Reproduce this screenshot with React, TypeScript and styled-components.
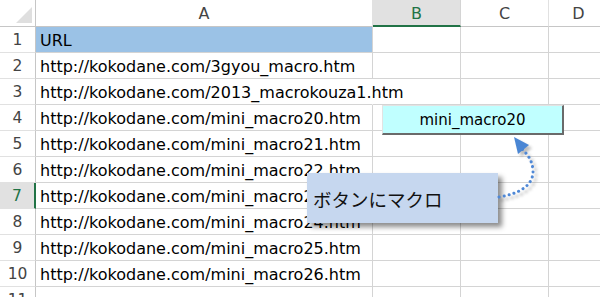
import React from "react";
import styled, { createGlobalStyle } from "styled-components";

const Global = createGlobalStyle`
  html, body { margin: 0; padding: 0; background: #fff; overflow: hidden; }
  body { font-family: "DejaVu Sans", "Noto Sans CJK JP", sans-serif; }
`;

const Sheet = styled.div`
  position: relative;
  width: 600px;
  height: 297px;
  overflow: hidden;
  background: #fff;
`;

const Grid = styled.div`
  display: grid;
  grid-template-columns: 36px 337px 88px 88px 60px;
  grid-template-rows: 27px repeat(11, 26px);
`;

const Corner = styled.div`
  position: relative;
  border-right: 1px solid #c6c6c6;
  border-bottom: 1px solid #c6c6c6;
  background: #fff;
  &::after {
    content: "";
    position: absolute;
    right: 3px;
    bottom: 3px;
    width: 0;
    height: 0;
    border-left: 16px solid transparent;
    border-bottom: 16px solid #dfdfdf;
  }
`;

const ColHead = styled.div<{ $active?: boolean }>`
  display: flex;
  align-items: center;
  justify-content: center;
  font-family: "DejaVu Sans", sans-serif;
  font-size: 16px;
  color: ${(p) => (p.$active ? "#217346" : "#444")};
  background: ${(p) => (p.$active ? "#e1e1e1" : "#fff")};
  border-right: 1px solid ${(p) => (p.$active ? "#d4d4d4" : "#e1e1e1")};
  border-bottom: ${(p) => (p.$active ? "2px solid #217346" : "1px solid #c6c6c6")};
  padding-top: ${(p) => (p.$active ? "1px" : "0")};
`;

const RowHead = styled.div<{ $active?: boolean }>`
  display: flex;
  align-items: center;
  justify-content: center;
  font-family: "DejaVu Sans", sans-serif;
  font-size: 15.5px;
  color: ${(p) => (p.$active ? "#217346" : "#444")};
  background: ${(p) => (p.$active ? "#e1e1e1" : "#fff")};
  border-right: ${(p) => (p.$active ? "2px solid #217346" : "1px solid #c6c6c6")};
  border-bottom: 1px solid #e1e1e1;
`;

const Cell = styled.div<{ $fill?: string; $spill?: boolean }>`
  display: flex;
  align-items: center;
  padding: 1px 0 0 4px;
  white-space: nowrap;
  overflow: visible;
  font-family: "DejaVu Sans", "Noto Sans CJK JP", sans-serif;
  font-size: 16px;
  color: #000;
  background: ${(p) => p.$fill || "transparent"};
  border-right: 1px solid ${(p) => (p.$spill ? "transparent" : "#d4d4d4")};
  border-bottom: 1px solid #d4d4d4;
`;

const MacroButton = styled.div`
  position: absolute;
  left: 382px;
  top: 105px;
  width: 182px;
  height: 30px;
  box-sizing: border-box;
  background: #c0ffff;
  border-top: 1px solid #e3e3e3;
  border-left: 1px solid #e3e3e3;
  border-right: 2px solid #6a6a6a;
  border-bottom: 2px solid #6a6a6a;
  display: flex;
  align-items: center;
  justify-content: center;
  font-family: "DejaVu Sans", sans-serif;
  font-size: 15px;
  color: #000;
  z-index: 3;
`;

const Callout = styled.div`
  position: absolute;
  left: 307px;
  top: 173px;
  width: 191px;
  height: 50px;
  box-sizing: border-box;
  background: #c6d7ef;
  box-shadow: 4px 4px 5px rgba(0, 0, 0, 0.45);
  display: flex;
  align-items: center;
  padding: 2px 0 0 6px;
  font-family: "Noto Sans CJK JP", sans-serif;
  font-size: 18.5px;
  color: #111;
  z-index: 3;
`;

const Arrow = styled.svg`
  position: absolute;
  left: 0;
  top: 0;
  width: 600px;
  height: 297px;
  z-index: 4;
  pointer-events: none;
`;

const urls = [
  "URL",
  "http://kokodane.com/3gyou_macro.htm",
  "http://kokodane.com/2013_macrokouza1.htm",
  "http://kokodane.com/mini_macro20.htm",
  "http://kokodane.com/mini_macro21.htm",
  "http://kokodane.com/mini_macro22.htm",
  "http://kokodane.com/mini_macro23.htm",
  "http://kokodane.com/mini_macro24.htm",
  "http://kokodane.com/mini_macro25.htm",
  "http://kokodane.com/mini_macro26.htm",
  "",
];

export default function App() {
  return (
    <Sheet>
      <Global />
      <Grid>
        <Corner />
        <ColHead>A</ColHead>
        <ColHead $active>B</ColHead>
        <ColHead>C</ColHead>
        <ColHead>D</ColHead>
        {urls.map((u, i) => (
          <React.Fragment key={i}>
            <RowHead $active={i === 6}>{i + 1}</RowHead>
            <Cell $fill={i === 0 ? "#9bc2e6" : undefined} $spill={i === 2}>
              {u}
            </Cell>
            <Cell />
            <Cell />
            <Cell />
          </React.Fragment>
        ))}
      </Grid>
      <MacroButton>mini_macro20</MacroButton>
      <Callout>ボタンにマクロ</Callout>
      <Arrow viewBox="0 0 600 297">
        <defs>
          <filter id="sh" x="-50%" y="-50%" width="200%" height="200%">
            <feGaussianBlur stdDeviation="1.5" />
          </filter>
        </defs>
        <g opacity="0.35" filter="url(#sh)" transform="translate(3,3)">
          <path
            d="M499 197 C 518 194, 534 186, 533 170 C 532 160, 528 155, 522 149"
            fill="none"
            stroke="#444"
            strokeWidth="3"
            strokeDasharray="0.1 5"
            strokeLinecap="round"
          />
          <polygon points="514,137 529,145 518,154" fill="#444" />
        </g>
        <path
          d="M499 197 C 518 194, 534 186, 533 170 C 532 160, 528 155, 522 149"
          fill="none"
          stroke="#4f88d6"
          strokeWidth="3"
          strokeDasharray="0.1 5"
          strokeLinecap="round"
        />
        <polygon points="514,137 529,145 518,154" fill="#4a86d4" />
      </Arrow>
    </Sheet>
  );
}
